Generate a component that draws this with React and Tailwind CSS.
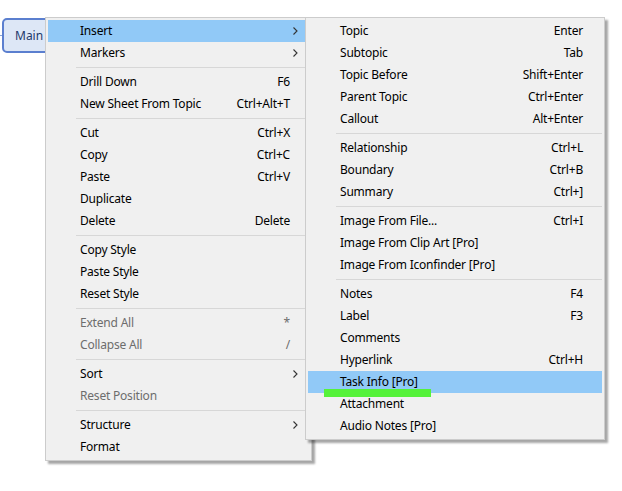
import React from "react";

const mainItems = [
  [
    { label: "Insert", arrow: true, active: true },
    { label: "Markers", arrow: true },
  ],
  [
    { label: "Drill Down", key: "F6" },
    { label: "New Sheet From Topic", key: "Ctrl+Alt+T" },
  ],
  [
    { label: "Cut", key: "Ctrl+X" },
    { label: "Copy", key: "Ctrl+C" },
    { label: "Paste", key: "Ctrl+V" },
    { label: "Duplicate" },
    { label: "Delete", key: "Delete" },
  ],
  [
    { label: "Copy Style" },
    { label: "Paste Style" },
    { label: "Reset Style" },
  ],
  [
    { label: "Extend All", key: "*", disabled: true },
    { label: "Collapse All", key: "/", disabled: true },
  ],
  [
    { label: "Sort", arrow: true },
    { label: "Reset Position", disabled: true },
  ],
  [
    { label: "Structure", arrow: true },
    { label: "Format" },
  ],
];

const insertItems = [
  [
    { label: "Topic", key: "Enter" },
    { label: "Subtopic", key: "Tab" },
    { label: "Topic Before", key: "Shift+Enter" },
    { label: "Parent Topic", key: "Ctrl+Enter" },
    { label: "Callout", key: "Alt+Enter" },
  ],
  [
    { label: "Relationship", key: "Ctrl+L" },
    { label: "Boundary", key: "Ctrl+B" },
    { label: "Summary", key: "Ctrl+]" },
  ],
  [
    { label: "Image From File...", key: "Ctrl+I" },
    { label: "Image From Clip Art [Pro]" },
    { label: "Image From Iconfinder [Pro]" },
  ],
  [
    { label: "Notes", key: "F4" },
    { label: "Label", key: "F3" },
    { label: "Comments" },
    { label: "Hyperlink", key: "Ctrl+H" },
    { label: "Task Info [Pro]", active: true },
    { label: "Attachment" },
    { label: "Audio Notes [Pro]" },
  ],
];

function Chevron() {
  return (
    <svg width="5" height="8" viewBox="0 0 5 8" className="absolute right-[11px] top-[7px]">
      <path d="M0.5 0.5 L4 4 L0.5 7.5" fill="none" stroke="#333" strokeWidth="1.1" />
    </svg>
  );
}

function Menu({ groups, className }) {
  return (
    <div className={`absolute border border-[#cccccc] bg-[#f0f0f0] p-[2px] shadow-[3px_3px_2px_rgba(0,0,0,0.35)] ${className}`}>
      {groups.map((group, gi) => (
        <div key={gi}>
          {gi > 0 && (
            <div className="h-[7px] flex items-center pl-[28px]">
              <div className="h-px w-full bg-[#d7d7d7]" />
            </div>
          )}
          {group.map((item) => (
            <div
              key={item.label}
              className={`relative flex h-[22px] items-center pl-[32px] pr-[19px] ${
                item.active ? "bg-[#91c9f7]" : ""
              } ${item.disabled ? "text-[#6d6d6d]" : "text-black"}`}
            >
              <span className="flex-1">{item.label}</span>
              {item.key && <span>{item.key}</span>}
              {item.arrow && <Chevron />}
            </div>
          ))}
        </div>
      ))}
    </div>
  );
}

export default function App() {
  return (
    <div
      className="relative h-[491px] w-[622px] overflow-hidden bg-white text-[12px] leading-none tracking-[-0.2px]"
      style={{ fontFamily: '"Noto Sans", sans-serif' }}
    >
      {/* topic node on the map */}
      <div className="absolute left-0 top-[35px] h-px w-[3px] bg-[#8aa4d6]" />
      <div className="absolute left-[2px] top-[18px] flex h-[35px] w-[90px] items-center whitespace-nowrap rounded-[5px] border-2 border-[#5b7fcf] bg-[#dde7f6] pl-[11px] tracking-[0px] text-[#1f3a6b]">
        Main Topic
      </div>

      <Menu groups={mainItems} className="left-[45px] top-[17px] w-[267px]" />
      <Menu groups={insertItems} className="left-[305px] top-[17px] w-[300px]" />

      {/* marker highlight */}
      <div className="absolute left-[324px] top-[389px] h-[8px] w-[107px] bg-[#55f23a]" />
    </div>
  );
}
